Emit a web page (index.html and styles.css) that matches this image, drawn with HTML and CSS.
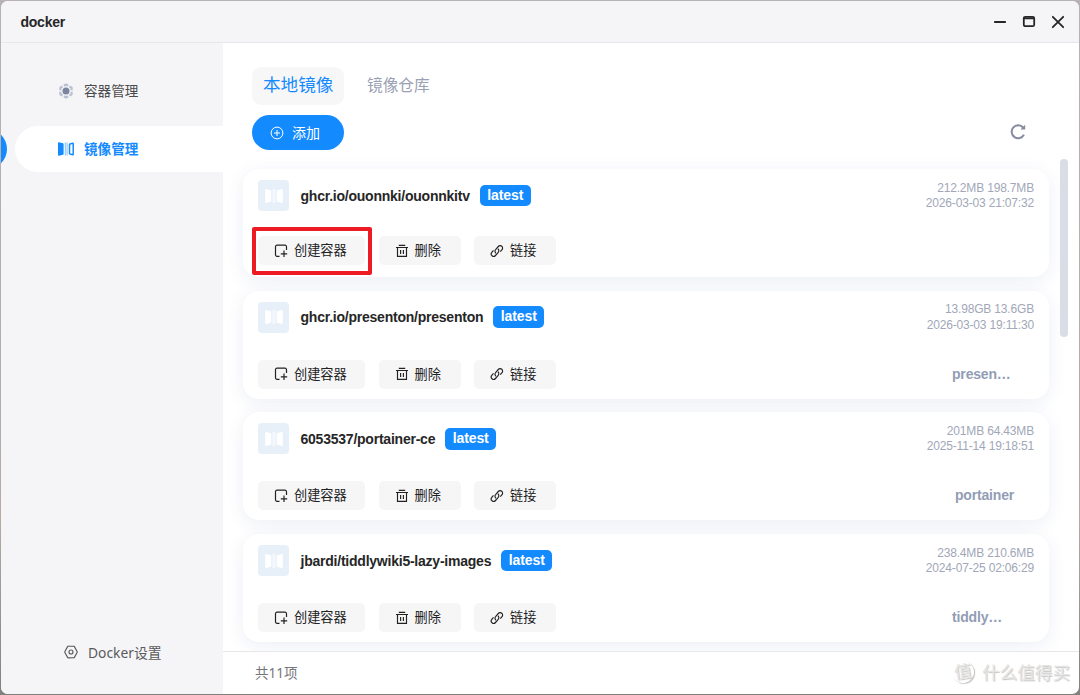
FILE: index.html
```html
<!DOCTYPE html>
<html lang="zh-CN">
<head>
    <meta charset="UTF-8">
    <meta name="viewport" content="width=device-width, initial-scale=1.0">
    <title>docker</title>
    <link rel="stylesheet" href="styles.css">
</head>
<body>
    <!-- 图标 -->
    <svg class="sprite" xmlns="http://www.w3.org/2000/svg">
        <symbol id="icon-image" viewBox="0 0 18 16">
            <path d="M2 1.300l4 1a.8.8 0 0 1 .6.8v9.800a.8.8 0 0 1-.6.8l-4 1A.9.9 0 0 1 1 13.800V2.200a.9.9 0 0 1 1-.9z" fill="currentColor"></path>
            <path d="M8.300 1.500v13M10.100 1.500v13" stroke="currentColor" stroke-width=".9" opacity=".6"></path>
            <path d="M15.700 2.300l-2.700.7a.7.7 0 0 0-.5.7v8.600a.7.7 0 0 0 .5.7l2.700.7a.4.4 0 0 0 .5-.4V2.700a.4.4 0 0 0-.5-.4z" fill="none" stroke="currentColor" stroke-width="1.500"></path>
        </symbol>
        <symbol id="icon-image-solid" viewBox="0 0 18 16">
            <path d="M1.200 1l4.400 1.200a.8.8 0 0 1 .6.8v10a.8.8 0 0 1-.6.8L1.200 15a.9.9 0 0 1-1-.9V1.900a.9.9 0 0 1 1-.9zM16.800 1l-4.400 1.200a.8.8 0 0 0-.6.8v10a.8.8 0 0 0 .6.8l4.400 1.200a.9.9 0 0 0 1-.9V1.900a.9.9 0 0 0-1-.9z" fill="currentColor"></path>
            <path d="M8.100 1v14M9.900 1v14" stroke="currentColor" stroke-width=".9"></path>
        </symbol>
        <symbol id="icon-create" viewBox="0 0 14 14">
            <path d="M5.500 12.300H3a1.500 1.500 0 0 1-1.500-1.500V2.700A1.500 1.500 0 0 1 3 1.200h8a1.500 1.500 0 0 1 1.500 1.500v3.300M10 6.600v6.400M6.800 9.800h6.400" fill="none" stroke="currentColor" stroke-width="1.200"></path>
        </symbol>
        <symbol id="icon-delete" viewBox="0 0 14 14">
            <path d="M3.800 1.400h6.400M1 3.500h12M2.500 3.500v8.800h9V3.500M5.600 6v4M8.400 6v4" fill="none" stroke="currentColor" stroke-width="1.150"></path>
        </symbol>
        <symbol id="icon-link" viewBox="0 0 14 14">
            <path d="M5.900 9.200a2.500 2.500 0 0 1-.1-3.800l2.500-2.900a2.400 2.400 0 0 1 3.700 3.200l-1.700 2M7.900 4.800a2.500 2.500 0 0 1 .1 3.800l-2.500 2.900a2.400 2.400 0 0 1-3.700-3.200l1.700-2" fill="none" stroke="currentColor" stroke-width="1.150"></path>
        </symbol>
    </svg>

    <div class="window">
        <header class="titlebar">
            <h1>docker</h1>
            <div class="window-controls">
                <svg width="14" height="14" viewBox="0 0 14 14"><path d="M1.800 7h10.400"></path></svg>
                <svg width="14" height="14" viewBox="0 0 14 14"><rect x="1.800" y="1.800" width="10.400" height="9.400" rx="1.500"></rect><path d="M2 3.400h10"></path></svg>
                <svg width="14" height="14" viewBox="0 0 14 14"><path d="M1.800 1.800l10.400 10.400M12.200 1.800L1.800 12.200"></path></svg>
            </div>
        </header>

        <div class="body">
            <nav class="sidebar">
                <a class="nav-item">
                    <svg width="16" height="16" viewBox="0 0 16 16">
                        <path d="M8 1.500l5.600 3.250v6.500L8 14.500l-5.600-3.250v-6.500z" fill="none" stroke="#b9c0d2" stroke-width="2.200" stroke-linejoin="round" stroke-dasharray="4.900 1.575" stroke-dashoffset="2.450"></path>
                        <circle cx="8" cy="8" r="3.500" fill="#7d849d"></circle>
                    </svg>
                    <span>容器管理</span>
                </a>
                <a class="nav-item active">
                    <svg width="18" height="16"><use href="#icon-image"></use></svg>
                    <span>镜像管理</span>
                </a>
                <a class="nav-item settings">
                    <svg width="14" height="14" viewBox="0 0 14 14" fill="none" stroke="currentColor" stroke-width="1.150">
                        <path d="M4.300 1.200h5.400a.8.8 0 0 1 .7.4l2.700 4.900a1 1 0 0 1 0 1l-2.700 4.900a.8.8 0 0 1-.7.4H4.300a.8.8 0 0 1-.7-.4L.9 7.500a1 1 0 0 1 0-1l2.700-4.900a.8.8 0 0 1 .7-.4z"></path>
                        <circle cx="7" cy="7" r="2"></circle>
                    </svg>
                    <span>Docker设置</span>
                </a>
            </nav>

            <main class="content">
                <div class="tabs">
                    <span class="tab active">本地镜像</span>
                    <span class="tab">镜像仓库</span>
                </div>
                <div class="toolbar">
                    <button class="add-button">
                        <svg width="14" height="14" viewBox="0 0 14 14" fill="none" stroke="currentColor"><circle cx="7" cy="7" r="5.900"></circle><path d="M7 4v6M4 7h6"></path></svg>
                        <span>添加</span>
                    </button>
                    <svg class="refresh" width="18" height="18" viewBox="0 0 18 18">
                        <path d="M15 11.600A6.500 6.500 0 1 1 14.200 4.600" fill="none" stroke="currentColor" stroke-width="2"></path>
                        <path d="M16.200 1.700v4.800h-4.800z" fill="currentColor"></path>
                    </svg>
                </div>

                <div class="list">
                    <div class="cards">
                        <article class="card">
                            <div class="card-head">
                                <div class="thumb"><svg width="18" height="16"><use href="#icon-image-solid"></use></svg></div>
                                <h2>ghcr.io/ouonnki/ouonnkitv</h2>
                                <span class="tag">latest</span>
                                <div class="meta">212.2MB 198.7MB<br>2026-03-03 21:07:32</div>
                            </div>
                            <div class="actions first">
                                <div class="highlight"></div>
                                <button class="action create"><svg><use href="#icon-create"></use></svg><span>创建容器</span></button>
                                <button class="action"><svg><use href="#icon-delete"></use></svg><span>删除</span></button>
                                <button class="action"><svg><use href="#icon-link"></use></svg><span>链接</span></button>
                            </div>
                        </article>
                        <article class="card">
                            <div class="card-head">
                                <div class="thumb"><svg width="18" height="16"><use href="#icon-image-solid"></use></svg></div>
                                <h2>ghcr.io/presenton/presenton</h2>
                                <span class="tag">latest</span>
                                <div class="meta">13.98GB 13.6GB<br>2026-03-03 19:11:30</div>
                            </div>
                            <div class="actions">
                                <button class="action create"><svg><use href="#icon-create"></use></svg><span>创建容器</span></button>
                                <button class="action"><svg><use href="#icon-delete"></use></svg><span>删除</span></button>
                                <button class="action"><svg><use href="#icon-link"></use></svg><span>链接</span></button>
                                <span class="used-by">presen…</span>
                            </div>
                        </article>
                        <article class="card">
                            <div class="card-head">
                                <div class="thumb"><svg width="18" height="16"><use href="#icon-image-solid"></use></svg></div>
                                <h2>6053537/portainer-ce</h2>
                                <span class="tag">latest</span>
                                <div class="meta">201MB 64.43MB<br>2025-11-14 19:18:51</div>
                            </div>
                            <div class="actions">
                                <button class="action create"><svg><use href="#icon-create"></use></svg><span>创建容器</span></button>
                                <button class="action"><svg><use href="#icon-delete"></use></svg><span>删除</span></button>
                                <button class="action"><svg><use href="#icon-link"></use></svg><span>链接</span></button>
                                <span class="used-by wide">portainer</span>
                            </div>
                        </article>
                        <article class="card">
                            <div class="card-head">
                                <div class="thumb"><svg width="18" height="16"><use href="#icon-image-solid"></use></svg></div>
                                <h2>jbardi/tiddlywiki5-lazy-images</h2>
                                <span class="tag">latest</span>
                                <div class="meta">238.4MB 210.6MB<br>2024-07-25 02:06:29</div>
                            </div>
                            <div class="actions">
                                <button class="action create"><svg><use href="#icon-create"></use></svg><span>创建容器</span></button>
                                <button class="action"><svg><use href="#icon-delete"></use></svg><span>删除</span></button>
                                <button class="action"><svg><use href="#icon-link"></use></svg><span>链接</span></button>
                                <span class="used-by">tiddly…</span>
                            </div>
                        </article>
                    </div>
                    <div class="scrollbar"></div>
                </div>

                <footer class="statusbar">
                    <span>共11项</span>
                    <div class="watermark">
                        <span class="watermark-logo">值</span>
                        <span>什么值得买</span>
                    </div>
                </footer>
            </main>
        </div>
    </div>
</body>
</html>
```
FILE: styles.css
```css
:root {
    --primary-color: #148aff;
    --text-color: #262626;
    --muted-color: #a1a7b8;
    --panel-bg: #f5f5f8;
    --button-bg: #f6f6f7;
    --line-color: #e7e7ea;
}

* {
    margin: 0;
    padding: 0;
    box-sizing: border-box;
}

body {
    height: 695px;
    padding: 1px;
    overflow: hidden;
    background: linear-gradient(#b7b2b4, #b5aaa6 75%, #81807d);
    font-family: "Liberation Sans", "Noto Sans CJK SC", sans-serif;
    color: var(--text-color);
}

button {
    border: none;
    font-family: inherit;
    cursor: pointer;
}

.sprite {
    display: none;
}

.window {
    height: 693px;
    display: flex;
    flex-direction: column;
    border-radius: 7px;
    overflow: hidden;
    background: #fff;
}

/* 标题栏 */
.titlebar {
    height: 42px;
    flex: none;
    display: flex;
    align-items: center;
    justify-content: space-between;
    padding: 0 14px 0 19.5px;
    background: var(--panel-bg);
    border-bottom: 1px solid var(--line-color);
}

.titlebar h1 {
    font-size: 14px;
    line-height: 20px;
    letter-spacing: -0.25px;
}

.window-controls {
    display: flex;
    gap: 15px;
}

.window-controls svg {
    fill: none;
    stroke: #262626;
    stroke-width: 1.8;
    stroke-linecap: round;
}

.body {
    flex: 1;
    min-height: 0;
    display: flex;
}

/* 侧边栏 */
.sidebar {
    width: 222px;
    flex: none;
    display: flex;
    flex-direction: column;
    padding: 25px 0 19px;
    background: var(--panel-bg);
}

.nav-item {
    position: relative;
    height: 46px;
    display: flex;
    align-items: center;
    gap: 10px;
    margin-left: 14px;
    padding-left: 43px;
    font-size: 13.6px;
    color: #4c4c4c;
}

.nav-item span {
    padding-bottom: 2px;
}

.nav-item.active {
    margin-top: 12px;
    padding-left: 42px;
    gap: 9px;
    border-radius: 23px 0 0 23px;
    background: #fff;
    color: var(--primary-color);
    font-weight: 700;
}

.nav-item.active::before {
    content: "";
    position: absolute;
    left: -44px;
    top: 4px;
    width: 36px;
    height: 38px;
    border-radius: 50%;
    background: var(--primary-color);
}

.nav-item.settings {
    margin-top: auto;
    padding-left: 49px;
    gap: 10px;
    font-family: "Noto Sans", "Noto Sans CJK SC", sans-serif;
    font-size: 13.8px;
    color: #5a5a5c;
}

.nav-item.settings span {
    padding-bottom: 1px;
}

/* 主区域 */
.content {
    flex: 1;
    min-width: 0;
    display: flex;
    flex-direction: column;
}

.tabs {
    display: flex;
    align-items: center;
    gap: 12px;
    height: 38px;
    margin: 24px 0 0 29px;
}

.tab {
    height: 38px;
    padding: 0 11px;
    border-radius: 9px;
    font-size: 15.7px;
    line-height: 38px;
    white-space: nowrap;
    color: #9aa1b3;
}

.tab.active {
    width: 92px;
    background: #f7f7f8;
    font-size: 17.6px;
    line-height: 36px;
    color: var(--primary-color);
}

.toolbar {
    display: flex;
    align-items: center;
    justify-content: space-between;
    margin: 10px 52px 0 29px;
}

.add-button {
    width: 92px;
    height: 35px;
    display: flex;
    align-items: center;
    gap: 8px;
    padding-left: 18px;
    border-radius: 18px;
    background: var(--primary-color);
    color: #fff;
    font-size: 14px;
}

.add-button span {
    padding-bottom: 2px;
}

.refresh {
    margin-bottom: 1px;
    color: #858ca0;
}

.list {
    flex: 1;
    min-height: 0;
    display: flex;
    padding: 9px 11px 0 20px;
    overflow: hidden;
}

.cards {
    flex: 1;
    display: flex;
    flex-direction: column;
    gap: 13.7px;
    padding-top: 10px;
}

.card {
    height: 108px;
    flex: none;
    padding: 11px 15px 0;
    border-radius: 16px;
    background: #fff;
    box-shadow: 0 4px 18px rgba(60, 80, 150, 0.09);
}

.card-head {
    height: 31px;
    display: flex;
    align-items: center;
}

.thumb {
    width: 31px;
    height: 31px;
    display: flex;
    align-items: center;
    justify-content: center;
    border-radius: 4px;
    background: #e7f0f9;
    color: #fff;
}

.card h2 {
    margin-left: 11.5px;
    font-size: 14px;
    line-height: 20px;
    letter-spacing: -0.23px;
}

.tag {
    width: 51px;
    height: 21.5px;
    margin-left: 10px;
    border-radius: 5px;
    background: var(--primary-color);
    color: #fff;
    font-size: 14px;
    font-weight: 700;
    line-height: 21px;
    letter-spacing: -0.1px;
    text-align: center;
}

.meta {
    margin-left: auto;
    padding-top: 1px;
    font-size: 12px;
    line-height: 15.5px;
    letter-spacing: -0.17px;
    text-align: right;
    color: var(--muted-color);
}

.actions {
    position: relative;
    height: 29px;
    display: flex;
    gap: 13.5px;
    margin-top: 27px;
}

.actions.first {
    margin-top: 25px;
}

.action {
    width: 82px;
    display: flex;
    align-items: center;
    gap: 6px;
    padding-left: 16px;
    border-radius: 5px;
    background: var(--button-bg);
    color: #222;
    font-size: 13.2px;
    white-space: nowrap;
}

.action span {
    padding-bottom: 2px;
}

.action.create {
    width: 107px;
}

.action svg {
    width: 14px;
    height: 14px;
    flex: none;
}

.highlight {
    position: absolute;
    left: -6px;
    top: -9px;
    width: 120px;
    height: 48px;
    border: 4px solid #ed1c24;
    border-radius: 2px;
}

.used-by {
    width: 82px;
    margin-left: auto;
    font-size: 14px;
    font-weight: 700;
    line-height: 28px;
    letter-spacing: -0.18px;
    color: #929db5;
}

.used-by.wide {
    width: 79px;
}

.scrollbar {
    width: 8px;
    height: 178px;
    margin-left: 11px;
    border-radius: 4px;
    background: #d9dde6;
}

.statusbar {
    height: 43px;
    flex: none;
    display: flex;
    align-items: center;
    justify-content: space-between;
    padding: 0 9px 3px 32px;
    border-top: 1px solid var(--line-color);
    font-family: "Noto Sans", "Noto Sans CJK SC", sans-serif;
    font-size: 13.5px;
    color: #75767a;
}

.watermark {
    display: flex;
    align-items: center;
    gap: 8px;
    font-size: 17.6px;
    color: #e6e6e6;
    text-shadow: 1px 1px 1px #c4c4c4;
}

.watermark-logo {
    width: 22px;
    height: 22px;
    border-radius: 50%;
    box-shadow: 1px 1px 1px #c4c4c4;
    line-height: 20px;
    text-align: center;
    transform: rotate(-8deg);
}
```
